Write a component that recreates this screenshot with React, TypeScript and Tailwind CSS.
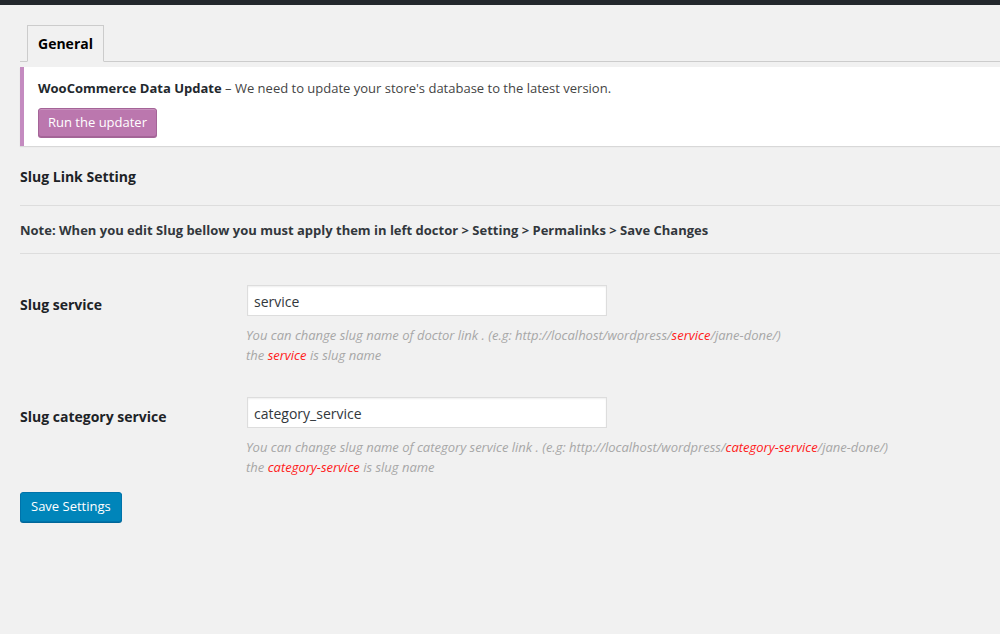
import React from 'react';

const font = { fontFamily: '"Open Sans", "Noto Sans", sans-serif' };

function Description({ before, slug }: { before: string; slug: string }) {
  return (
    <div className="mt-[9px] text-[13px] italic leading-[20px] text-[#a7a7a7]">
      <p className="-ml-px">
        {before} (e.g: http://localhost/wordpress/<span className="text-[#ff1a1a]">{slug}</span>/jane-done/)
      </p>
      <p className="-ml-px">
        the <span className="text-[#ff1a1a]">{slug}</span> is slug name
      </p>
    </div>
  );
}

function FieldRow({ label, value, children }: { label: string; value: string; children: React.ReactNode }) {
  return (
    <div className="flex">
      <div className="w-[227px] pt-[9px] text-[14px] font-bold text-[#1d2327]">{label}</div>
      <div>
        <input
          defaultValue={value}
          className="h-[31px] w-[360px] border border-[#dddddd] bg-white px-[6px] pt-px text-[14px] text-[#32373c] shadow-[inset_0_1px_2px_rgba(0,0,0,0.07)] outline-none"
          style={font}
        />
        {children}
      </div>
    </div>
  );
}

export default function App() {
  return (
    <div className="min-h-[634px] w-[1000px] overflow-hidden bg-[#f1f1f1] text-[#444]" style={font}>
      <div className="h-[5px] bg-[#23282d]" />

      <div className="pl-[20px]">
        {/* tabs */}
        <div className="mt-[20px] flex border-b border-[#cccccc] pl-[7px]">
          <div className="-mb-px h-[37px] border border-[#cccccc] border-b-[#f1f1f1] bg-[#f1f1f1] px-[10px] pt-[9px] text-[14px] font-bold leading-[18px] text-[#000]">
            General
          </div>
        </div>

        {/* notice */}
        <div className="mt-[5px] border-l-4 border-[#c48bc0] bg-white pb-[9px] pl-[14px] pt-[10px] shadow-[0_1px_1px_rgba(0,0,0,0.1)]">
          <p className="text-[13px] leading-[22px] text-[#444]">
            <strong className="font-bold text-[#23282d]">WooCommerce Data Update</strong> – We need to update your
            store's database to the latest version.
          </p>
          <button className="mt-[9px] h-[29px] rounded-[3px] border border-[#a46497] bg-[#bb77ae] px-[9px] text-[13px] text-white shadow-[inset_0_1px_0_rgba(255,255,255,0.2),0_1px_0_#a46497]">
            Run the updater
          </button>
        </div>

        <h2 className="mt-[21px] text-[14px] font-bold leading-[20px] text-[#1d2327]">Slug Link Setting</h2>
        <hr className="mt-[18px] border-t border-[#dddddd]" />
        <p className="mt-[14px] text-[13px] font-bold leading-[20px] text-[#32373c]">
          Note: When you edit Slug bellow you must apply them in left doctor &gt; Setting &gt; Permalinks &gt; Save Changes
        </p>
        <hr className="mt-[13px] border-t border-[#dddddd]" />

        <div className="mt-[31px] flex flex-col gap-[32px]">
          <FieldRow label="Slug service" value="service">
            <Description before="You can change slug name of doctor link ." slug="service" />
          </FieldRow>
          <FieldRow label="Slug category service" value="category_service">
            <Description before="You can change slug name of category service link ." slug="category-service" />
          </FieldRow>
        </div>

        <button className="mt-[15px] h-[30px] rounded-[3px] border border-[#0073aa] bg-[#0085ba] px-[10px] text-[13px] text-white shadow-[0_1px_0_#006799]">
          Save Settings
        </button>
      </div>
    </div>
  );
}
